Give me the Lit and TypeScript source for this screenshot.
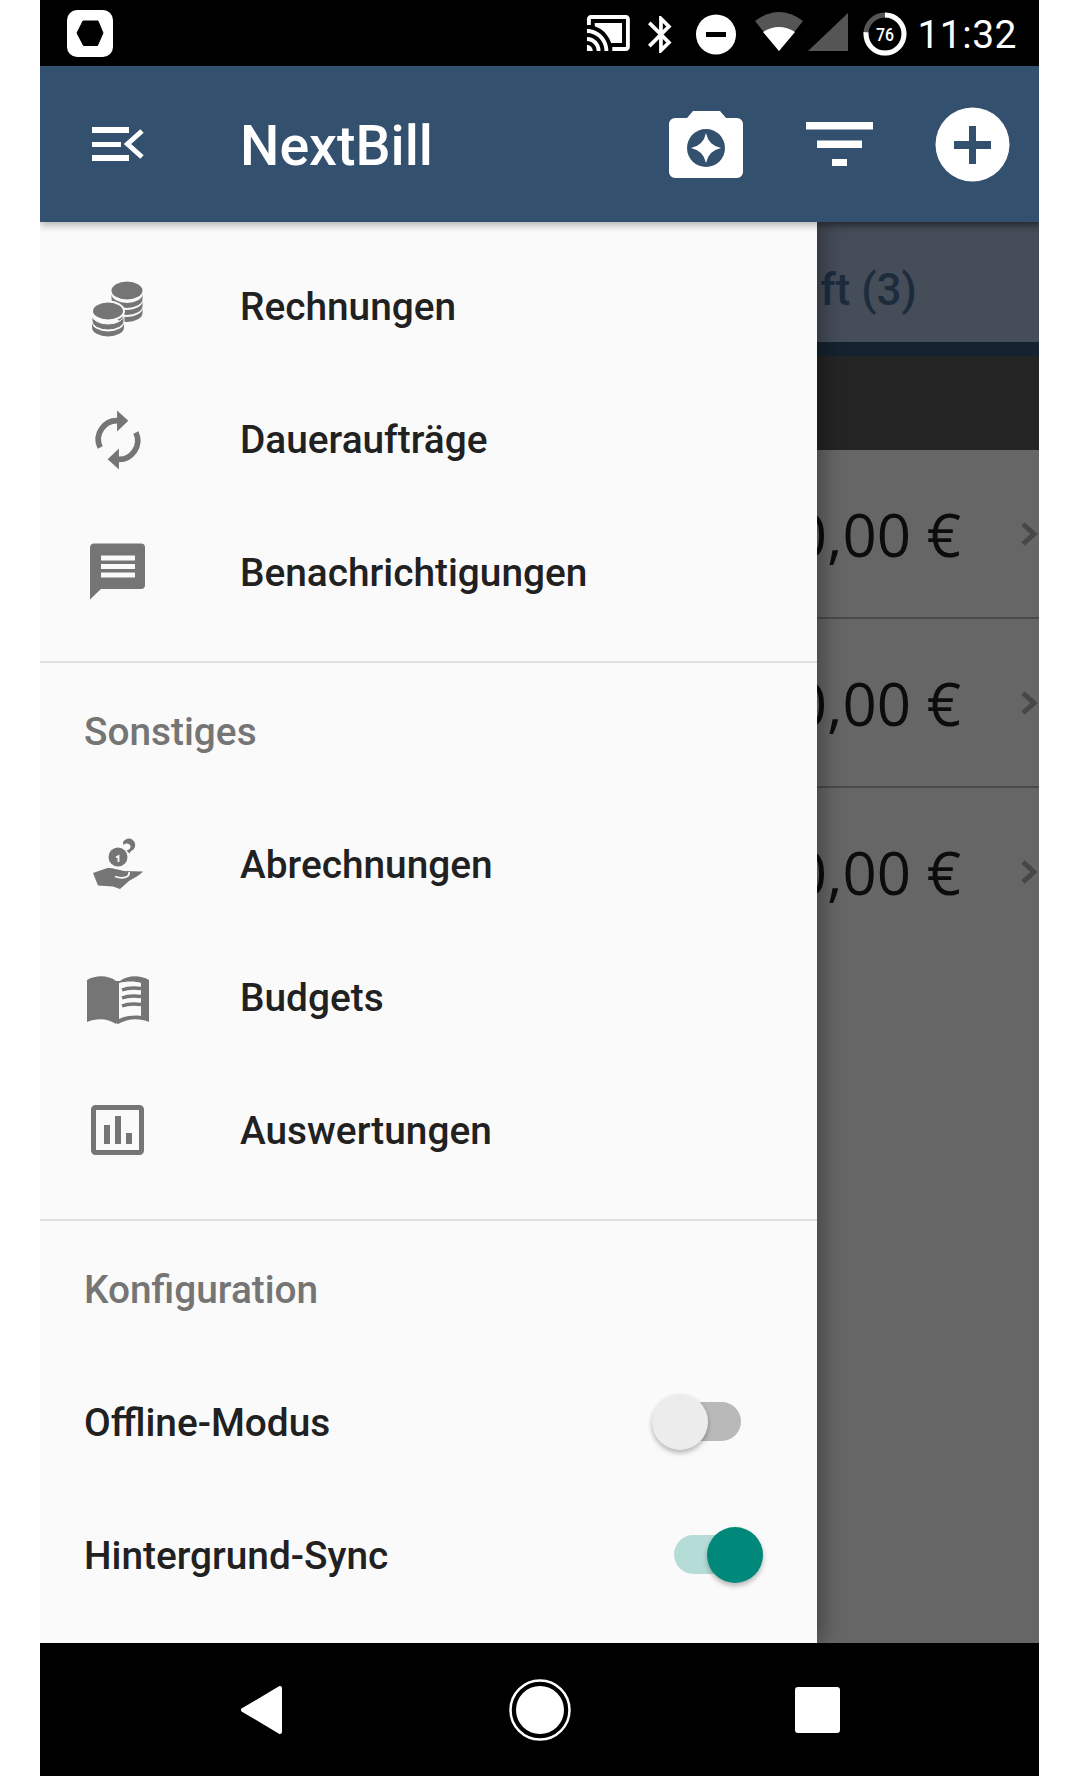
import { LitElement, html, css, svg } from "lit";
import { customElement } from "lit/decorators.js";

const APPBAR = "#34506f";

const coinBand = (cx: number, rx: number, y: number) =>
    svg`<path d="M${cx - rx} ${y}A${rx} 9 0 0 0 ${cx + rx} ${y}v5A${rx} 9 0 0 1 ${cx - rx} ${y + 5}z" />`;

// every drawer icon sits in a 72x72 box
const ICONS: Record<string, unknown> = {
    coins: svg`
        <g fill="#757575">
            <ellipse cx="45" cy="19.5" rx="15.5" ry="9" />
            ${coinBand(45, 15.5, 23)}${coinBand(45, 15.5, 30)}${coinBand(45, 15.5, 37)}
            <g stroke="#fafafa" stroke-width="2">
                <ellipse cx="26" cy="40" rx="16" ry="9.5" />
            </g>
            <path d="M10 44A16 9 0 0 0 42 44v6A16 9 0 0 1 10 50z" stroke="#fafafa" stroke-width="1" />
            ${coinBand(26, 16, 51.5)}
        </g>`,
    sync: svg`
        <g fill="#757575" transform="translate(36 36) scale(0.94) translate(-36 -36)">
            <path d="M17 44A20 20 0 0 1 37 15.5" fill="none" stroke="#757575" stroke-width="6" />
            <path d="M35 4.5L47 15.5 35 27z" />
            <path d="M55 28A20 20 0 0 1 35 56.5" fill="none" stroke="#757575" stroke-width="6" />
            <path d="M37 67.5L25 56.5 37 45z" />
        </g>`,
    chat: svg`
        <path d="M11 6.5H59a4 4 0 0 1 4 4V48a4 4 0 0 1-4 4H19L8 62.5V10a4 4 0 0 1 3-3.5z" fill="#757575" />
        <path d="M19 18.5h34v5H19zM19 27h34v5H19zM19 35.5h34v5H19z" fill="#fafafa" />`,
    hand: svg`
        <g fill="#757575">
            <circle cx="36" cy="28" r="9.5" />
            <path d="M41 13a6.500 6.500 0 1 1 10.500 7.500a7 7 0 0 0-4 4l-3-3c4-1 5-4 3-6a4 4 0 0 0-6 1z" />
            <path d="M11 44L24 39.500C30 38 34 41 38 41L42 42 61 42.500C58 46 52 49 47 52L38 60 31 57.500 16 56.500z" />
            <path d="M34 28.500l2.500-1.500V33" fill="none" stroke="#fafafa" stroke-width="1.800" />
            <path d="M33 47.500C40 50 48 49 47 43" fill="none" stroke="#fafafa" stroke-width="1.800" />
        </g>`,
    book: svg`
        <path d="M5 18C14 13 26 13 34 19V62C26 56 14 56 5 60z" fill="#757575" />
        <path d="M38 19C46 13 58 13 67 18V60C58 56 46 56 36 62L34 61V19zM37 21V57C45 53 56 53 59 54V21C54 19 44 19 37 21z" fill="#757575" fill-rule="evenodd" />
        <path d="M40 28C46 25.500 52 25.500 59 26.500M40 36C46 33.500 52 33.500 59 34.500M40 44C46 41.500 52 41.500 59 42.500" fill="none" stroke="#757575" stroke-width="3.500" />`,
    chart: svg`
        <rect x="11.500" y="12.500" width="48" height="45" rx="2" fill="none" stroke="#757575" stroke-width="5" />
        <path d="M22 30h6v19h-6zM33 21h6v28h-6zM44 38h6v11h-6z" fill="#757575" />`,
};

@customElement("drawer-switch")
export class DrawerSwitch extends LitElement {
    static properties = {
        on: { type: Boolean },
    };

    declare on: boolean;

    constructor() {
        super();
        this.on = false;
    }

    static styles = css`
        :host {
            display: block;
        }

        .switch {
            position: relative;
            width: 67px;
            height: 39px;
            border-radius: 20px;
            background: #b9b9b9;
        }

        .switch.on {
            background: #b6dcd8;
        }

        .thumb {
            position: absolute;
            top: -8px;
            left: -22px;
            width: 56px;
            height: 56px;
            border-radius: 50%;
            background: #ececec;
            box-shadow: 0 3px 5px rgba(0, 0, 0, 0.28);
        }

        .on .thumb {
            left: 33px;
            background: #00887a;
        }
    `;

    render() {
        return html`<div class="switch ${this.on ? "on" : ""}"><div class="thumb"></div></div>`;
    }
}

@customElement("app-root")
export class AppRoot extends LitElement {
    static styles = css`
        :host {
            display: block;
            width: 1080px;
            height: 1776px;
            background: #fff;
            font-family: Roboto, "Liberation Sans", sans-serif;
        }

        svg {
            display: block;
            flex: none;
        }

        .telefon {
            width: 999px;
            height: 1776px;
            margin-left: 40px;
            display: flex;
            flex-direction: column;
            overflow: hidden;
        }

        .statusleiste {
            height: 66px;
            flex: none;
            background: #000;
            display: flex;
            align-items: center;
            padding-left: 27px;
            padding-right: 22px;
            box-sizing: border-box;
            color: #fff;
        }

        .statusicons {
            margin-left: auto;
        }

        .uhr {
            font-size: 39px;
            letter-spacing: 0.5px;
            line-height: 66px;
            margin-left: 7px;
            margin-top: 3px;
        }

        .kopf {
            position: relative;
            z-index: 2;
            height: 156px;
            flex: none;
            background: #34506f;
            box-shadow: 0 3px 8px rgba(0, 0, 0, 0.3);
            display: flex;
            align-items: center;
            color: #fff;
            padding-left: 52px;
            padding-right: 29px;
        }

        .kopf-titel {
            font-size: 55.5px;
            font-weight: 500;
            margin-left: 96px;
            margin-top: 4px;
            flex: 1;
        }

        .icon-kamera {
            margin-right: 63px;
        }

        .icon-filter {
            margin-right: 62px;
        }

        .inhalt {
            position: relative;
            flex: 1;
            background: #666;
        }

        .tabs {
            height: 120px;
            box-sizing: border-box;
            padding-top: 16px;
            background: #454d59;
            color: #1c2c3d;
            font-size: 44px;
            font-weight: 500;
            display: flex;
            align-items: center;
            justify-content: flex-end;
            padding-right: 122px;
            box-shadow: inset 0 10px 8px -8px rgba(0, 0, 0, 0.3);
        }

        .tabs-linie {
            height: 14px;
            background: #15222f;
        }

        .band {
            height: 94px;
            background: #242424;
        }

        .betrag {
            height: 167px;
            border-bottom: 2px solid #4a4a4a;
            display: flex;
            align-items: center;
            justify-content: flex-end;
            color: #0c0c0c;
            font-size: 60px;
            font-family: "Open Sans", Roboto, sans-serif;
            padding-right: 1px;
        }

        .betrag.letzter {
            border-bottom: 0;
        }

        .betrag-wert {
            margin-right: 59px;
        }

        .menue {
            position: absolute;
            z-index: 1;
            top: 0;
            bottom: 0;
            left: 0;
            width: 777px;
            box-sizing: border-box;
            padding-top: 18px;
            background: #fafafa;
            box-shadow: 4px 0 22px rgba(0, 0, 0, 0.38);
        }

        .zeile {
            height: 133px;
            display: flex;
            align-items: center;
            font-size: 38.8px;
            font-weight: 500;
            color: #212121;
        }

        .zeile svg {
            margin-left: 42px;
            margin-right: 86px;
        }

        .trenner {
            height: 2px;
            margin-top: 22px;
            background: #e0e0e0;
        }

        .abschnitt {
            height: 135px;
            box-sizing: border-box;
            padding-left: 44px;
            padding-top: 2px;
            display: flex;
            align-items: center;
            font-size: 38.8px;
            font-weight: 500;
            color: #757575;
        }

        .zeile.schalter {
            padding-left: 44px;
            padding-right: 76px;
            justify-content: space-between;
        }

        .zeile.schalter drawer-switch {
            margin-top: -3px;
        }

        .navi {
            position: relative;
            z-index: 3;
            height: 133px;
            flex: none;
            background: #000;
            display: flex;
            align-items: center;
            padding-left: 200px;
        }

        .navi-kreis {
            margin-left: 226px;
        }

        .navi-quadrat {
            margin-left: 224px;
        }
    `;

    hauptZeilen = [
        { icon: "coins", text: "Rechnungen" },
        { icon: "sync", text: "Daueraufträge" },
        { icon: "chat", text: "Benachrichtigungen" },
    ];

    sonstigesZeilen = [
        { icon: "hand", text: "Abrechnungen" },
        { icon: "book", text: "Budgets" },
        { icon: "chart", text: "Auswertungen" },
    ];

    renderZeile(zeile: { icon: string; text: string }) {
        return html`
            <div class="zeile">
                <svg width="72" height="72" viewBox="0 0 72 72">${ICONS[zeile.icon]}</svg>
                ${zeile.text}
            </div>
        `;
    }

    renderStatus() {
        return html`
            <svg class="statusicons" width="330" height="66" viewBox="0 0 330 66">
                <g transform="translate(5 9) scale(1.95 2)" fill="#fff">
                    <path d="M21 3H3c-1.100 0-2 .9-2 2v3h2V5h18v14h-7v2h7c1.100 0 2-.9 2-2V5c0-1.100-.9-2-2-2zM1 18v3h3c0-1.660-1.340-3-3-3zm0-4v2c2.760 0 5 2.240 5 5h2c0-3.870-3.130-7-7-7zm0-4v2c4.970 0 9 4.030 9 9h2c0-6.080-4.930-11-11-11z" />
                    <path d="M19 7H5v1.630c3.960 1.280 7.090 4.410 8.370 8.370H19V7z" />
                </g>
                <path transform="translate(58.750 12.300) scale(1.850)" fill="#fff" fill-rule="evenodd" d="M17.710 7.710L12 2h-1v7.590L6.410 5 5 6.410 10.590 12 5 17.590 6.410 19 11 14.410V22h1l5.710-5.710-4.300-4.290 4.300-4.290zM13 5.830l1.880 1.880L13 9.590V5.830zm1.880 10.460L13 18.170v-3.760l1.880 1.880z" />
                <circle cx="136" cy="34.500" r="20" fill="#fff" />
                <rect x="126" y="32" width="20" height="5" fill="#000" />
                <path d="M175 21Q199 3 223 21L199 51z" fill="#555" />
                <path d="M183 32Q199 22 215 32L199 51z" fill="#fff" />
                <path d="M228 51L268 13V51z" fill="#555" />
                <circle cx="305" cy="34" r="19" fill="none" stroke="#555" stroke-width="5" />
                <circle cx="305" cy="34" r="19" fill="none" stroke="#fff" stroke-width="5" stroke-dasharray="90.700 119.400" transform="rotate(-90 305 34)" />
                <text x="305" y="41" font-size="19" font-weight="500" text-anchor="middle" fill="#fff" font-family="Roboto, sans-serif" textLength="18" lengthAdjust="spacingAndGlyphs">76</text>
            </svg>
        `;
    }

    render() {
        return html`
            <div class="telefon">
                <div class="statusleiste">
                    <svg width="46" height="47" viewBox="0 0 46 47">
                        <rect width="46" height="47" rx="10" fill="#fff" />
                        <path d="M16 11h15l5 12-5.500 12.500h-14L10 23z" fill="#000" stroke="#000" stroke-linejoin="round" />
                    </svg>
                    ${this.renderStatus()}
                    <span class="uhr">11:32</span>
                </div>

                <div class="kopf">
                    <svg width="52" height="34" viewBox="0 0 52 34">
                        <path d="M0 0h37v6H0zM0 15h29v5H0zM0 28h37v6H0z" fill="#fff" />
                        <path d="M50 4L35.500 17 50 30" fill="none" stroke="#fff" stroke-width="5" />
                    </svg>
                    <div class="kopf-titel">NextBill</div>
                    <svg class="icon-kamera" width="74" height="67" viewBox="0 0 74 67">
                        <path d="M24 0h27l6 7h11a6 6 0 0 1 6 6v48a6 6 0 0 1-6 6H6a6 6 0 0 1-6-6V13a6 6 0 0 1 6-6h12z" fill="#fff" />
                        <circle cx="37" cy="37" r="19" fill="${APPBAR}" />
                        <path d="M37 22Q39.500 34.500 52 37 39.500 39.500 37 52 34.500 39.500 22 37 34.500 34.500 37 22z" fill="#fff" />
                    </svg>
                    <svg class="icon-filter" width="67" height="44" viewBox="0 0 67 44">
                        <path d="M0 0h67v7.500H0zM11 18.500h45V26H11zM26 37h15v7H26z" fill="#fff" />
                    </svg>
                    <svg width="75" height="75" viewBox="0 0 75 75">
                        <circle cx="37.500" cy="37.500" r="37" fill="#fff" />
                        <path d="M34 19h7v15h15v8H41v15h-7V42H19v-8h15z" fill="${APPBAR}" />
                    </svg>
                </div>

                <div class="inhalt">
                    <div class="tabs">ft (3)</div>
                    <div class="tabs-linie"></div>
                    <div class="band"></div>
                    ${[0, 1, 2].map(i => html`
                        <div class="betrag ${i === 2 ? "letzter" : ""}">
                            <span class="betrag-wert">0,00 €</span>
                            <svg width="18" height="26" viewBox="0 0 18 26">
                                <path d="M3 3L14 13 3 23" fill="none" stroke="#474747" stroke-width="5" />
                            </svg>
                        </div>
                    `)}

                    <div class="menue">
                        ${this.hauptZeilen.map(z => this.renderZeile(z))}
                        <div class="trenner"></div>
                        <div class="abschnitt">Sonstiges</div>
                        ${this.sonstigesZeilen.map(z => this.renderZeile(z))}
                        <div class="trenner"></div>
                        <div class="abschnitt">Konfiguration</div>
                        <div class="zeile schalter">Offline-Modus <drawer-switch></drawer-switch></div>
                        <div class="zeile schalter">Hintergrund-Sync <drawer-switch on></drawer-switch></div>
                    </div>
                </div>

                <div class="navi">
                    <svg width="43" height="50" viewBox="0 0 43 50">
                        <path d="M40 3V47L3 25z" fill="#fff" stroke="#fff" stroke-width="4" stroke-linejoin="round" />
                    </svg>
                    <svg class="navi-kreis" width="62" height="62" viewBox="0 0 62 62">
                        <circle cx="31" cy="31" r="29.500" fill="none" stroke="#fff" stroke-width="2.500" />
                        <circle cx="31" cy="31" r="24" fill="#fff" />
                    </svg>
                    <svg class="navi-quadrat" width="45" height="46" viewBox="0 0 45 46">
                        <rect width="45" height="46" rx="3" fill="#fff" />
                    </svg>
                </div>
            </div>
        `;
    }
}
